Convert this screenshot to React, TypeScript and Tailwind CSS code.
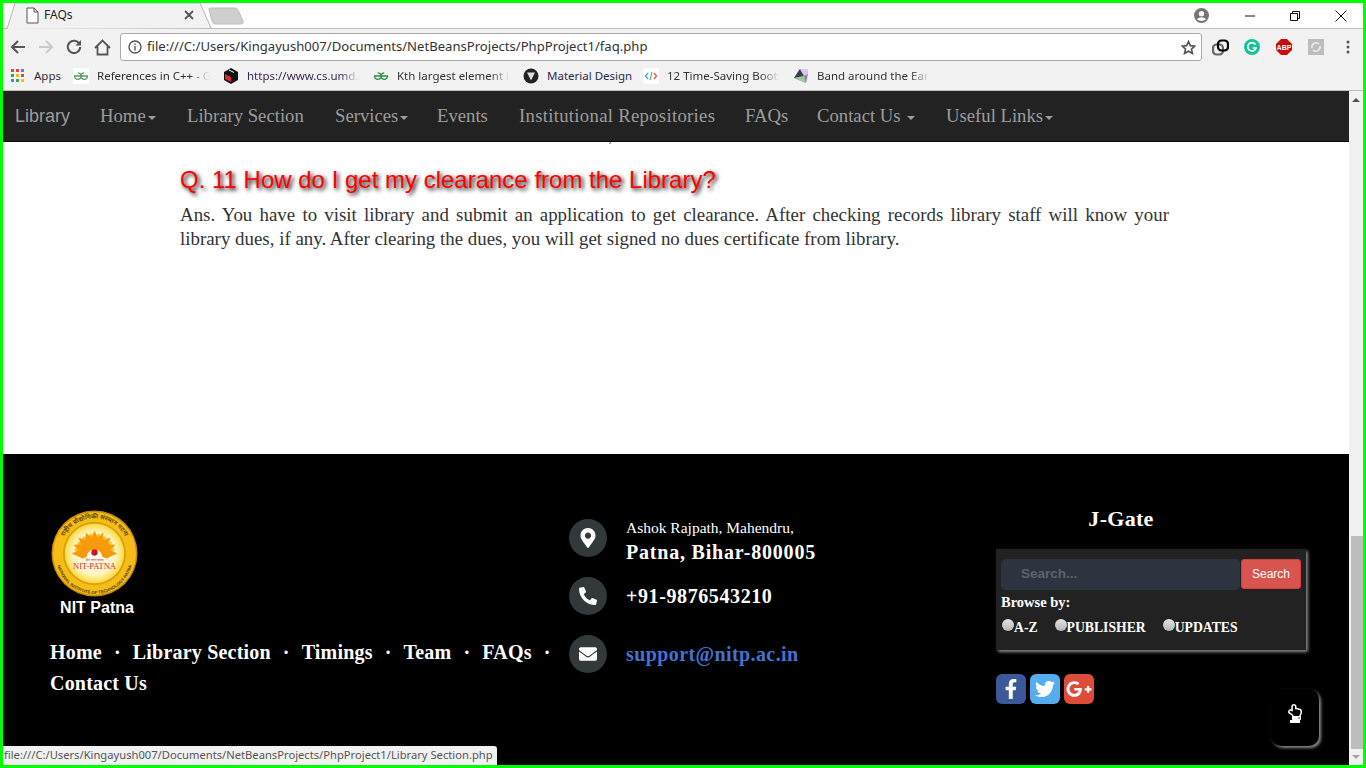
import React from "react";
import { FaEnvelope, FaFacebookF, FaGooglePlusG, FaMapMarkerAlt, FaPhoneAlt, FaRegHandPointUp, FaTwitter } from "react-icons/fa";

const serif = "font-['Liberation_Serif',serif]";
const ui = "font-['Noto_Sans',sans-serif]";

function Caret() {
  return <span className="inline-block ml-[2px] align-middle w-0 h-0 border-x-[4px] border-x-transparent border-t-[4px] border-t-[#9d9d9d]" />;
}

function Logo() {
  const petals = [-90, -67.5, -45, -22.5, 0, 22.5, 45, 67.5, 90];
  return (
    <svg width="87" height="87" viewBox="0 0 88 88">
      <defs>
        <radialGradient id="lg" cx="50%" cy="50%" r="50%">
          <stop offset="0%" stopColor="#ffffff" />
          <stop offset="72%" stopColor="#fff5c0" />
          <stop offset="100%" stopColor="#fdd93f" />
        </radialGradient>
        <path id="top" d="M8.500 44 A35.500 35.500 0 0 1 79.500 44" />
        <path id="bot" d="M5 46 A39 39 0 0 0 83 46" />
      </defs>
      <circle cx="44" cy="44" r="43.500" fill="#c98a12" />
      <circle cx="44" cy="44" r="42" fill="#f6bd16" />
      <circle cx="44" cy="44" r="32" fill="#d9a30f" />
      <circle cx="44" cy="44" r="30" fill="url(#lg)" />
      <text fontSize="6.400" fill="#6b4a10" fontFamily="'Noto Sans',sans-serif" fontWeight="700"><textPath href="#top" startOffset="50%" textAnchor="middle">राष्ट्रीय प्रौद्योगिकी संस्थान पटना</textPath></text>
      <text fontSize="4.400" fill="#4a3a10" fontFamily="'Liberation Sans',sans-serif" fontWeight="700"><textPath href="#bot" startOffset="50%" textAnchor="middle">NATIONAL INSTITUTE OF TECHNOLOGY PATNA</textPath></text>
      {[-78.750, -56.250, -33.750, -11.250, 11.250, 33.750, 56.250, 78.750].map((a) => (
        <path key={a} d="M44 44 L38 30 L44 23 L50 30 Z" fill="#ffc21f" transform={`rotate(${a} 44 44)`} />
      ))}
      {petals.map((a) => (
        <path key={a} d="M44 44 L39 32 L44 21 L49 32 Z" fill="#f79a0c" transform={`rotate(${a} 44 44)`} />
      ))}
      <path d="M36 48 A8 8 0 0 1 52 48 Z" fill="#fffdf2" />
      <circle cx="44" cy="43" r="3.200" fill="#d3121f" />
      <text x="44" y="52" fontSize="3.400" textAnchor="middle" fill="#b2222a" fontFamily="'Noto Sans',sans-serif">ज्ञानं परमं बलम्</text>
      <text x="44" y="60" fontSize="8.600" textAnchor="middle" fill="#cf2a33" fontFamily="'Liberation Serif',serif">NIT-PATNA</text>
    </svg>
  );
}

function Bookmark({ icon, label, color = "#333", narrow = false }: { icon: React.ReactNode; label: string; color?: string; narrow?: boolean }) {
  return (
    <div className={`flex items-center gap-[8px] shrink-0 ${narrow ? "w-[107px]" : "w-[137px]"}`}>
      <span className="w-[16px] h-[16px] shrink-0">{icon}</span>
      {narrow ? (
        <span className="whitespace-nowrap text-[11.500px]" style={{ color }}>{label}</span>
      ) : (
        <span
          className="w-[113px] overflow-hidden whitespace-nowrap text-[11.500px] [mask-image:linear-gradient(to_right,black_82%,transparent)]"
          style={{ color }}
        >
          {label}
        </span>
      )}
    </div>
  );
}

function GG({ c }: { c: string }) {
  return (
    <svg width="16" height="16" viewBox="0 0 16 16" fill="none" stroke={c} strokeWidth="1.300">
      <path d="M8 8 H1.500 A3.300 3.300 0 1 0 4.800 4.800 M8 8 H14.500 A3.300 3.300 0 1 1 11.200 4.800" />
    </svg>
  );
}

export default function App() {
  const links = ["Home", "Library Section", "Timings", "Team", "FAQs"];
  return (
    <div className={`relative w-[1366px] h-[768px] border-[3px] border-[#00ff00] overflow-hidden flex flex-col bg-white ${ui}`}>
      {/* tab strip */}
      <div className="relative h-[26px] shrink-0 bg-white border-b border-[#bdbdbd] flex">
        <svg className="absolute left-0 top-0" width="250" height="26" viewBox="0 0 250 26">
          <path d="M4 26 L12 0 H197 L208 25" fill="#f2f2f2" stroke="#b5b5b5" />
          <path d="M206.500 5 H232 Q234 5 235 7 L240 18 Q241 21 237 21 H212 Q210 21 209 18 L206 7 Q206 5 206.500 5 Z" fill="#cfcfcf" stroke="#bcbcbc" />
          <path d="M24 5 H31 L35 9 V20 H24 Z M31 5 V9 H35" fill="#fff" stroke="#555" strokeWidth="1" />
          <path d="M182 8 L190 16 M190 8 L182 16" stroke="#555" strokeWidth="1.800" />
        </svg>
        <span className="relative ml-[41px] mt-[4px] text-[12px] leading-[16px] text-[#222]">FAQs</span>
        <div className="ml-auto flex items-center h-full">
          <svg className="mr-[36px]" width="15" height="15" viewBox="0 0 16 16">
            <circle cx="8" cy="8" r="8" fill="#757575" />
            <circle cx="8" cy="6" r="2.800" fill="#fff" />
            <path d="M3 12 Q8 7.500 13 12 Q8 15.500 3 12 Z" fill="#fff" />
          </svg>
          <svg className="mr-[35px]" width="10" height="10" viewBox="0 0 10 10"><path d="M0 5 H10" stroke="#111" strokeWidth="1" /></svg>
          <svg className="mr-[35px]" width="10" height="10" viewBox="0 0 10 10" fill="none" stroke="#111"><path d="M2.500 2.500 V0.500 H9.500 V7.500 H7.500 M0.500 2.500 H7.500 V9.500 H0.500 Z" /></svg>
          <svg className="mr-[16px]" width="12" height="12" viewBox="0 0 12 12"><path d="M0.500 0.500 L11.500 11.500 M11.500 0.500 L0.500 11.500" stroke="#111" strokeWidth="1" /></svg>
        </div>
      </div>

      {/* toolbar */}
      <div className="h-[32px] pt-[4px] shrink-0 bg-[#f2f2f2] flex items-center">
        <svg className="ml-[7px]" width="16" height="16" viewBox="0 0 16 16" fill="none" stroke="#555" strokeWidth="2"><path d="M15 8 H2 M8 2 L2 8 L8 14" /></svg>
        <svg className="ml-[12px]" width="16" height="16" viewBox="0 0 16 16" fill="none" stroke="#c9c9c9" strokeWidth="2"><path d="M1 8 H14 M8 2 L14 8 L8 14" /></svg>
        <svg className="ml-[12px]" width="16" height="16" viewBox="0 0 16 16" fill="none" stroke="#555" strokeWidth="2"><path d="M13.500 5 A6.200 6.200 0 1 0 14.200 8" /><path d="M15 1 V6.500 H9.500 Z" fill="#555" stroke="none" /></svg>
        <svg className="ml-[12px]" width="17" height="17" viewBox="0 0 17 17" fill="none" stroke="#555" strokeWidth="1.800"><path d="M1 9 L8.500 1.500 L16 9 M3.500 7.500 V15.500 H13.500 V7.500" /></svg>
        <div className="ml-[9px] w-[1082px] h-[28px] bg-white border border-[#aaa] rounded-[3px] flex items-center">
          <svg className="ml-[7px]" width="14" height="14" viewBox="0 0 14 14" fill="none" stroke="#555" strokeWidth="1.400"><circle cx="7" cy="7" r="6" /><path d="M7 6 V10.500 M7 3.500 V5" /></svg>
          <span className="ml-[5px] text-[13.100px] text-[#333] whitespace-nowrap">file:///C:/Users/Kingayush007/Documents/NetBeansProjects/PhpProject1/faq.php</span>
          <svg className="ml-auto mr-[5px]" width="15" height="15" viewBox="0 0 24 24" fill="none" stroke="#555" strokeWidth="2.600"><path d="M12 2.500 L15 9 L22 9.800 L16.800 14.500 L18.300 21.500 L12 17.900 L5.700 21.500 L7.200 14.500 L2 9.800 L9 9 Z" /></svg>
        </div>
        <svg className="ml-[10px]" width="17" height="17" viewBox="0 0 17 17" fill="none" strokeWidth="2.200"><rect x="1" y="5.500" width="10" height="10" rx="3.500" stroke="#666" /><rect x="6" y="1.500" width="10" height="10" rx="3.500" stroke="#000" /></svg>
        <svg className="ml-[15px]" width="16" height="16" viewBox="0 0 16 16"><circle cx="8" cy="8" r="8" fill="#15c39a" /><path d="M11.500 5.500 A4.200 4.200 0 1 0 12 9 H8.800" fill="none" stroke="#fff" strokeWidth="1.600" /></svg>
        <svg className="ml-[16px]" width="16" height="16" viewBox="0 0 16 16"><path d="M5 0 H11 L16 5 V11 L11 16 H5 L0 11 V5 Z" fill="#c70d0d" /><text x="8" y="10.500" fontSize="7" fontWeight="700" textAnchor="middle" fill="#fff" fontFamily="'Liberation Sans',sans-serif">ABP</text></svg>
        <svg className="ml-[16px]" width="16" height="16" viewBox="0 0 16 16"><rect width="16" height="16" fill="#bdbdbd" /><path d="M4 9 A4.200 4.200 0 0 1 11 5 M12 7 A4.200 4.200 0 0 1 5 11" fill="none" stroke="#eee" strokeWidth="1.500" /></svg>
        <svg className="ml-[16px]" width="16" height="16" viewBox="0 0 16 16" fill="#555"><circle cx="8" cy="3" r="1.500" /><circle cx="8" cy="8" r="1.500" /><circle cx="8" cy="13" r="1.500" /></svg>
      </div>

      {/* bookmarks */}
      <div className="h-[30px] shrink-0 bg-[#f2f2f2] border-b border-[#bdbdbd] flex items-center pl-[8px]">
        <svg className="shrink-0" width="13" height="13" viewBox="0 0 13 13">
          {[0, 5, 10].flatMap((y, r) => [0, 5, 10].map((x, c) => (
            <rect key={`${x}-${y}`} x={x} y={y} width="3" height="3" fill={[["#e8453c", "#e8453c", "#4285f4"], ["#34a853", "#fbbc05", "#e8453c"], ["#4285f4", "#34a853", "#fbbc05"]][r][c]} />
          )))}
        </svg>
        <span className="ml-[10px] w-[27px] text-[11.500px] text-[#333]">Apps</span>
        <div className="ml-[12px] flex gap-[13px]">
          <Bookmark icon={<span className="block w-[16px] h-[16px] bg-white"><GG c="#5a9a68" /></span>} label="References in C++ - G" />
          <Bookmark icon={<svg width="16" height="16" viewBox="0 0 16 16"><path d="M8 0 L15 4 V12 L8 16 L1 12 V4 Z" fill="#111" /><path d="M2 6 L8 9 V14 L2 11 Z" fill="#e0242c" /><path d="M6 2 L11 4.500" stroke="#fff" strokeWidth="1" /></svg>} label="https://www.cs.umd.e" color="#3a2a55" />
          <Bookmark icon={<GG c="#2f8d46" />} label="Kth largest element in" />
          <Bookmark narrow icon={<svg width="16" height="16" viewBox="0 0 16 16"><circle cx="8" cy="8" r="7.500" fill="#222" /><path d="M4 4.500 H12 L8 12.500 Z" fill="#ddd" /></svg>} label="Material Design" color="#2a2a4a" />
          <Bookmark icon={<svg width="16" height="16" viewBox="0 0 16 16"><rect width="16" height="16" rx="3" fill="#fff" /><path d="M5 5 L2.500 8 L5 11" fill="none" stroke="#3fa9e0" strokeWidth="1.300" /><path d="M11 5 L13.500 8 L11 11" fill="none" stroke="#e5554f" strokeWidth="1.300" /><path d="M9 4 L7 12" stroke="#57b86b" strokeWidth="1.200" /></svg>} label="12 Time-Saving Boots" />
          <Bookmark icon={<svg width="16" height="16" viewBox="0 0 16 16"><path d="M1 10 L7 1 H15 V6 L13 15 Z" fill="#8f7cc0" /><path d="M7 1 L11 8 L1 10 Z" fill="#3e3a55" /><path d="M11 8 L13 15 L1 10 Z" fill="#9ecb8a" /><path d="M7 1 H15 V6 L11 8 Z" fill="#d6c8e8" /></svg>} label="Band around the Eart" />
        </div>
      </div>

      {/* page + scrollbar */}
      <div className="flex-1 min-h-0 flex">
        <div className="w-[1346px] flex flex-col min-h-0">
          <nav className="h-[51px] shrink-0 bg-[#222] border-b border-[#080808] flex items-center pl-[12px]">
            <span className="text-[18px] text-[#9d9d9d] font-['Liberation_Sans',sans-serif] w-[85px]">Library</span>
            <div className={`flex items-center text-[18.700px] text-[#9d9d9d] whitespace-nowrap ${serif}`}>
              <span className="w-[87px]">Home<Caret /></span>
              <span className="w-[148px]">Library Section</span>
              <span className="w-[102px]">Services<Caret /></span>
              <span className="w-[82px]">Events</span>
              <span className="w-[226px] tracking-[0.3px]">Institutional Repositories</span>
              <span className="w-[72px]">FAQs</span>
              <span className="w-[129px]">Contact Us <Caret /></span>
              <span>Useful Links<Caret /></span>
            </div>
          </nav>

          <main className="flex-1 min-h-0 bg-white overflow-hidden">
            <div className="h-[2px] overflow-hidden pl-[603px]">
              <div className={`-mt-[14px] text-[17px] leading-[18px] text-[#333] ${serif}`}>y</div>
            </div>
            <div className="pl-[177px] pr-[180px]">
              <h3 className="mt-[23px] text-[24px] leading-[26px] text-[#ff0000] font-['Liberation_Sans',sans-serif] [text-shadow:2px_2px_4px_#000000]">
                Q. 11 How do I get my clearance from the Library?
              </h3>
              <div className={`mt-[10px] text-[18.900px] leading-[24px] text-[#333] ${serif}`}>
                <p className="text-justify [text-align-last:justify]">Ans. You have to visit library and submit an application to get clearance. After checking records library staff will know your</p>
                <p>library dues, if any. After clearing the dues, you will get signed no dues certificate from library.</p>
              </div>
            </div>
          </main>

          <footer className={`h-[311px] shrink-0 bg-black flex ${serif}`}>
            <div className="w-[566px] pl-[47px] pt-[56px] shrink-0">
              <div className="w-[94px] flex flex-col items-center">
                <div className="self-start ml-px h-[87px]"><Logo /></div>
                <span className="text-[16px] leading-[18px] mt-[2px] font-bold text-white font-['Liberation_Sans',sans-serif]">NIT Patna</span>
              </div>
              <div className="mt-[20px] text-[20px] leading-[31px] font-bold text-white flex flex-wrap tracking-[0.2px]">
                {links.map((l) => (
                  <span key={l} className="whitespace-nowrap">{l}<span className="mx-[12px]">·</span></span>
                ))}
                <span>Contact Us</span>
              </div>
            </div>

            <div className="w-[426px] shrink-0 pt-[65px] flex flex-col gap-[20px]">
              <div className="flex items-center gap-[19px] h-[38px]">
                <span className="shrink-0 w-[38px] h-[38px] rounded-full bg-[#33383b] flex items-center justify-center text-white text-[20px]"><FaMapMarkerAlt /></span>
                <div className="text-white mt-[8px]">
                  <div className="text-[15.500px] leading-[20px]">Ashok Rajpath, Mahendru,</div>
                  <div className="text-[20px] leading-[28px] font-bold tracking-[0.8px]">Patna, Bihar-800005</div>
                </div>
              </div>
              <div className="flex items-center gap-[19px] h-[38px]">
                <span className="shrink-0 w-[38px] h-[38px] rounded-full bg-[#33383b] flex items-center justify-center text-white text-[18px]"><FaPhoneAlt /></span>
                <span className="text-[20px] font-bold text-white tracking-[0.6px]">+91-9876543210</span>
              </div>
              <div className="flex items-center gap-[19px] h-[38px]">
                <span className="shrink-0 w-[38px] h-[38px] rounded-full bg-[#33383b] flex items-center justify-center text-white text-[18px]"><FaEnvelope /></span>
                <span className="text-[20px] font-bold text-[#4472d2] tracking-[0.4px]">support@nitp.ac.in</span>
              </div>
            </div>

            <div className="w-[313px] shrink-0 pt-[53px] pl-px">
              <div className="text-center text-[22px] leading-[24px] font-bold text-white pr-[62px] tracking-[0.3px]">J-Gate</div>
              <div className="mt-[18px] w-[310px] h-[101px] bg-[#222] shadow-[2px_2px_3px_#888888] p-[5px] pt-[10px]">
                <div className="flex h-[31px]">
                  <div className="w-[239px] h-[31px] rounded-[5px] bg-[#2e3340] pl-[20px] flex items-center text-[13.500px] font-bold text-[#5d636e] font-['Liberation_Sans',sans-serif]">Search...</div>
                  <div className="ml-px w-[60px] h-[30px] rounded-[3px] bg-[#d9534f] border border-[#d43f3a] flex items-center justify-center text-[12px] text-white font-['Liberation_Sans',sans-serif]">Search</div>
                </div>
                <div className="mt-[3px] text-[14.500px] leading-[18px] font-bold text-white">Browse by:</div>
                <div className="mt-[8px] flex text-[13.700px] leading-[18px] font-bold text-white">
                  <span className="flex"><i className="ml-px w-[12px] h-[12px] rounded-full bg-gradient-to-b from-[#e4e4e4] to-[#b5b5b5] block" />A-Z</span>
                  <span className="flex ml-[17px]"><i className="w-[12px] h-[12px] rounded-full bg-gradient-to-b from-[#e4e4e4] to-[#b5b5b5] block" />PUBLISHER</span>
                  <span className="flex ml-[17px]"><i className="w-[12px] h-[12px] rounded-full bg-gradient-to-b from-[#e4e4e4] to-[#b5b5b5] block" />UPDATES</span>
                </div>
              </div>
              <div className="mt-[24px] flex gap-[4px] text-white text-[20px]">
                <span className="w-[30px] h-[30px] rounded-[6px] bg-[#3b5998] flex items-center justify-center"><FaFacebookF /></span>
                <span className="w-[30px] h-[30px] rounded-[6px] bg-[#55acee] flex items-center justify-center"><FaTwitter /></span>
                <span className="w-[30px] h-[30px] rounded-[6px] bg-[#dd4b39] flex items-center justify-center text-[26px]"><FaGooglePlusG /></span>
              </div>
            </div>
          </footer>
        </div>

        {/* scrollbar */}
        <div className="w-[14px] shrink-0 bg-[#f1f1f1] flex flex-col items-center">
          <div className="h-[17px] flex items-center justify-center shrink-0"><span className="w-0 h-0 border-x-[4px] border-x-transparent border-b-[4px] border-b-[#505050]" /></div>
          <div className="flex-1" />
          <div className="h-[213px] w-[12px] self-end bg-[#bdbdbd] shrink-0" />
          <div className="h-[16px] flex items-center justify-center shrink-0"><span className="w-0 h-0 border-x-[4px] border-x-transparent border-t-[4px] border-t-[#a3a3a3]" /></div>
        </div>
      </div>

      {/* back-to-top button */}
      <div className="absolute left-[1268px] top-[686px] w-[48px] h-[57px] rounded-[10px] bg-black shadow-[2px_2px_3px_#888888] flex flex-col items-center pt-[15px] text-white text-[16px]">
        <FaRegHandPointUp />
        <span className="w-[10px] h-[3px] bg-white" />
      </div>

      {/* status bubble */}
      <div className="absolute left-0 bottom-0 h-[19px] w-[494px] bg-[#f2f2f2] rounded-tr-[3px] flex items-center pl-px text-[11.200px] text-[#555] whitespace-nowrap overflow-hidden">
        file:///C:/Users/Kingayush007/Documents/NetBeansProjects/PhpProject1/Library Section.php
      </div>
    </div>
  );
}
